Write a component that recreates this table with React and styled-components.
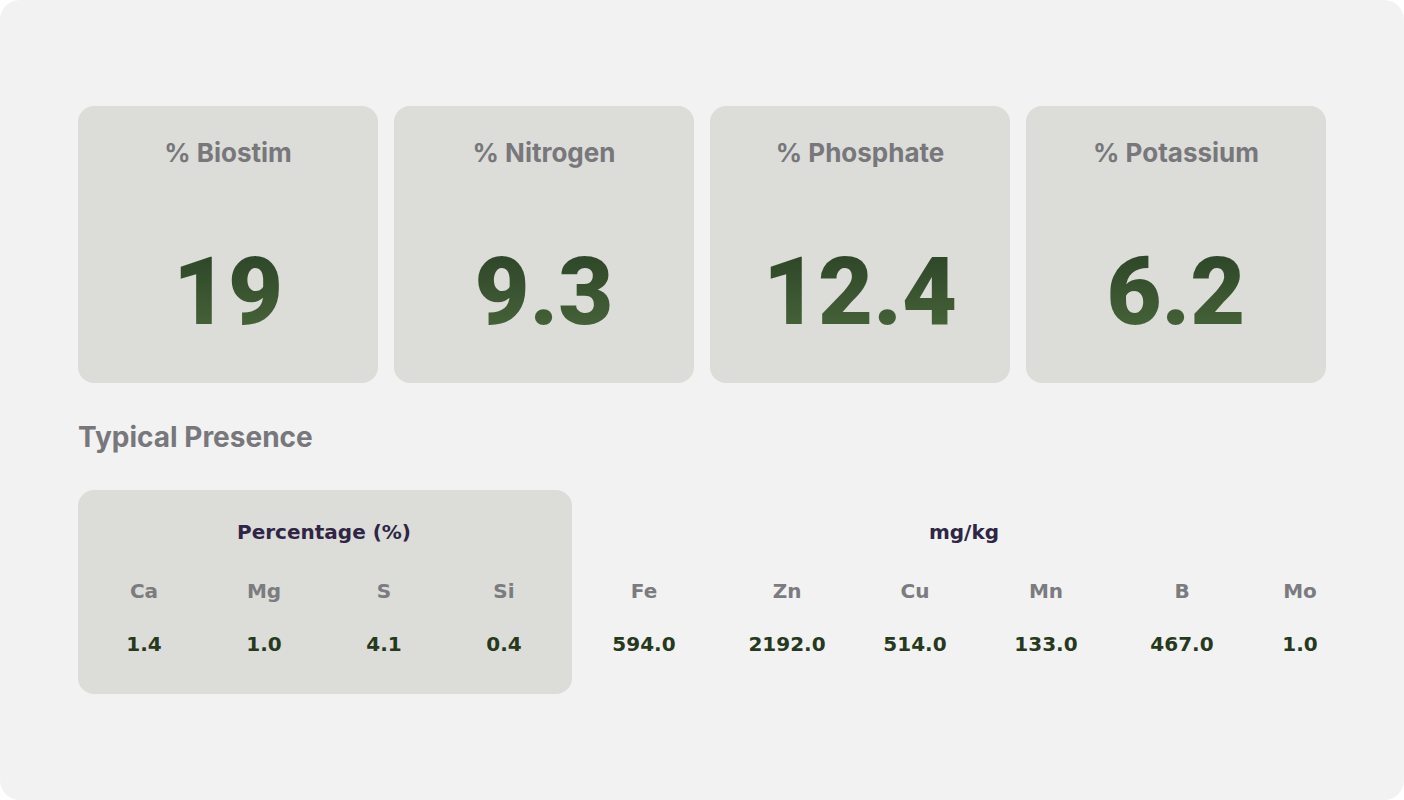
import React from "react";
import styled, { createGlobalStyle } from "styled-components";

const GlobalStyle = createGlobalStyle`
  body {
    margin: 0;
    background: #ffffff;
    font-family: "Inter", "Liberation Sans", sans-serif;
  }
`;

const Page = styled.div`
  box-sizing: border-box;
  height: 800px;
  background: #f2f2f2;
  border-radius: 20px;
  padding: 106px 78px 0 78px;
`;

const StatGrid = styled.div`
  display: grid;
  grid-template-columns: repeat(4, 300px);
  gap: 16px;
`;

const StatCard = styled.div`
  height: 277px;
  background: #dcdcd8;
  border-radius: 16px;
  display: flex;
  flex-direction: column;
  align-items: center;
`;

const StatLabel = styled.div`
  margin-top: 31px;
  font-family: "Inter", sans-serif;
  font-weight: 700;
  font-size: 26px;
  line-height: 32px;
  color: #77777c;
`;

const StatValue = styled.div`
  margin-top: 73px;
  font-family: "Roboto", "Liberation Sans", sans-serif;
  font-weight: 900;
  font-size: 95px;
  line-height: 100px;
  background: linear-gradient(180deg, #2a4226 0%, #4a673b 100%);
  -webkit-background-clip: text;
  background-clip: text;
  color: transparent;
`;

const SectionTitle = styled.h2`
  margin: 38px 0 0 0;
  font-family: "Inter", sans-serif;
  font-weight: 700;
  font-size: 28px;
  line-height: 32px;
  color: #77777c;
`;

const PresenceRow = styled.div`
  display: flex;
  margin-top: 37px;
`;

const Group = styled.div`
  box-sizing: border-box;
  height: 204px;
  background: ${(p) => (p.$filled ? "#dcdcd8" : "transparent")};
  border-radius: 16px;
  padding: ${(p) => (p.$filled ? "0 8px 0 6px" : "0")};
  display: flex;
  flex-direction: column;
`;

const GroupTitle = styled.div`
  margin-top: 29px;
  text-align: center;
  font-family: "DejaVu Sans", sans-serif;
  font-weight: 700;
  font-size: 20px;
  line-height: 26px;
  color: #2f2545;
`;

const Columns = styled.div`
  display: grid;
  grid-template-columns: ${(p) => p.$cols};
`;

const ElementName = styled.div`
  margin-top: 33px;
  text-align: center;
  font-family: "DejaVu Sans", sans-serif;
  font-weight: 700;
  font-size: 20px;
  line-height: 26px;
  color: #7b7b80;
`;

const ElementValue = styled.div`
  margin-top: 27px;
  text-align: center;
  font-family: "DejaVu Sans", sans-serif;
  font-weight: 700;
  font-size: 20px;
  line-height: 26px;
  color: #26391c;
`;

const stats = [
  { label: "% Biostim", value: "19" },
  { label: "% Nitrogen", value: "9.3" },
  { label: "% Phosphate", value: "12.4" },
  { label: "% Potassium", value: "6.2" },
];

const percentage = [
  ["Ca", "1.4"],
  ["Mg", "1.0"],
  ["S", "4.1"],
  ["Si", "0.4"],
];

const mgkg = [
  ["Fe", "594.0"],
  ["Zn", "2192.0"],
  ["Cu", "514.0"],
  ["Mn", "133.0"],
  ["B", "467.0"],
  ["Mo", "1.0"],
];

function ElementGroup({ title, items, cols, filled, width }) {
  return (
    <Group $filled={filled} style={{ width }}>
      <GroupTitle>{title}</GroupTitle>
      <Columns $cols={cols}>
        {items.map(([name]) => (
          <ElementName key={name}>{name}</ElementName>
        ))}
        {items.map(([name, v]) => (
          <ElementValue key={name + "v"}>{v}</ElementValue>
        ))}
      </Columns>
    </Group>
  );
}

export default function App() {
  return (
    <>
      <GlobalStyle />
      <Page>
        <StatGrid>
          {stats.map((s) => (
            <StatCard key={s.label}>
              <StatLabel>{s.label}</StatLabel>
              <StatValue>{s.value}</StatValue>
            </StatCard>
          ))}
        </StatGrid>
        <SectionTitle>Typical Presence</SectionTitle>
        <PresenceRow>
          <ElementGroup
            title="Percentage (%)"
            items={percentage}
            cols="repeat(4, 120px)"
            filled
            width="494px"
          />
          <ElementGroup
            title="mg/kg"
            items={mgkg}
            cols="144px 142px 114px 148px 124px 112px"
            width="784px"
          />
        </PresenceRow>
      </Page>
    </>
  );
}
